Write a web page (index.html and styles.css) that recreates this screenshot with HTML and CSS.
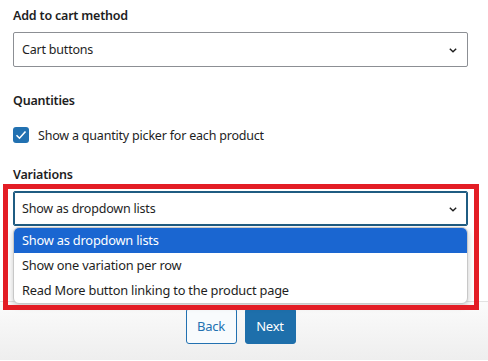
FILE: index.html
```html
<!DOCTYPE html>
<html lang="en">
<head>
  <meta charset="UTF-8">
  <meta name="viewport" content="width=device-width, initial-scale=1.0">
  <title>Setup Wizard</title>
  <link rel="stylesheet" href="styles.css">
</head>
<body>
  <div class="card">
    <div class="field-label">Add to cart method</div>
    <div class="select">
      <span>Cart buttons</span>
      <svg class="chevron" width="8" height="5" viewBox="0 0 8 5"><path d="M0.8 0.8L4 3.8l3.2-3" fill="none" stroke="#1e1e1e" stroke-width="1.4"/></svg>
    </div>

    <div class="field-label qty-label">Quantities</div>
    <label class="check-row">
      <span class="checkbox">
        <svg width="12" height="10" viewBox="0 0 12 10"><path d="M1.5 5.2l3 3L10.5 1.5" fill="none" stroke="#fff" stroke-width="1.6"/></svg>
      </span>
      Show a quantity picker for each product
    </label>

    <div class="field-label var-label">Variations</div>
    <div class="select-wrap">
      <div class="select focused">
        <span>Show as dropdown lists</span>
        <svg class="chevron" width="8" height="5" viewBox="0 0 8 5"><path d="M0.8 0.8L4 3.8l3.2-3" fill="none" stroke="#1e1e1e" stroke-width="1.4"/></svg>
      </div>
      <ul class="dropdown">
        <li class="active">Show as dropdown lists</li>
        <li>Show one variation per row</li>
        <li>Read More button linking to the product page</li>
      </ul>
    </div>
  </div>

  <div class="footer">
    <button class="btn btn-back">Back</button>
    <button class="btn btn-next">Next</button>
  </div>

  <!-- annotation box -->
  <div class="highlight"></div>
</body>
</html>
```

FILE: styles.css
```css
* {
  margin: 0;
  padding: 0;
  box-sizing: border-box;
}
body {
  font-family: "Noto Sans", "Open Sans", sans-serif;
  font-size: 12.5px;
  letter-spacing: -0.2px;
  color: #1e1e1e;
  background: #fff;
  height: 361px;
  overflow: hidden;
  position: relative;
}
/* Main form area */
.card {
  padding: 6px 20px 0 13px;
  height: 302px;
  border-bottom: 1px solid #e2e2e2;
  background: #fff;
}
.field-label {
  font-weight: 600;
  font-size: 12.5px;
  line-height: 20px;
  margin-bottom: 6px;
}
.qty-label {
  margin-top: 24px;
  margin-bottom: 14px;
}
.var-label {
  margin-top: 20px;
}
.select {
  display: flex;
  align-items: center;
  justify-content: space-between;
  height: 35px;
  padding: 0 10px 0 8px;
  border: 1px solid #8c8f94;
  border-radius: 2px;
  background: #fff;
}
.select.focused {
  border-color: #1f5c82;
  box-shadow: inset 0 0 0 1px #1f5c82;
}
.chevron {
  margin-top: 2px;
}
.check-row {
  display: flex;
  align-items: center;
  gap: 9px;
  height: 20px;
}
.checkbox {
  width: 16px;
  height: 16px;
  border-radius: 3px;
  background: #2271b1;
  display: flex;
  align-items: center;
  justify-content: center;
}
/* Native dropdown popup */
.select-wrap {
  position: relative;
}
.dropdown {
  position: absolute;
  left: 0;
  right: 0;
  top: 36px;
  list-style: none;
  background: #fff;
  border: 1px solid #c8c8c8;
  border-radius: 6px;
  box-shadow: 0 2px 6px rgba(0,0,0,0.22);
  overflow: hidden;
  z-index: 2;
}
.dropdown li {
  height: 25px;
  line-height: 25px;
  padding-left: 8px;
  font-size: 12.8px;
}
.dropdown li.active {
  background: #1a66d1;
  color: #fff;
}
/* Footer with nav buttons */
.footer {
  height: 58px;
  padding: 6px 20px 0 13px;
  display: flex;
  justify-content: center;
  gap: 8px;
  background: linear-gradient(#fbfbfb, #eeeeee);
}
.btn {
  width: 51px;
  height: 36px;
  border-radius: 3px;
  font-family: inherit;
  font-size: 13px;
  letter-spacing: -0.2px;
  border: 1px solid #2271b1;
}
.btn-back {
  background: #f8fbfd;
  color: #2271b1;
}
.btn-next {
  background: #1e6fab;
  border-color: #1e6fab;
  color: #fff;
}
.highlight {
  position: absolute;
  left: 3px;
  top: 184px;
  width: 476px;
  height: 126px;
  border: 5px solid #e31d25;
  z-index: 3;
  pointer-events: none;
}
```
